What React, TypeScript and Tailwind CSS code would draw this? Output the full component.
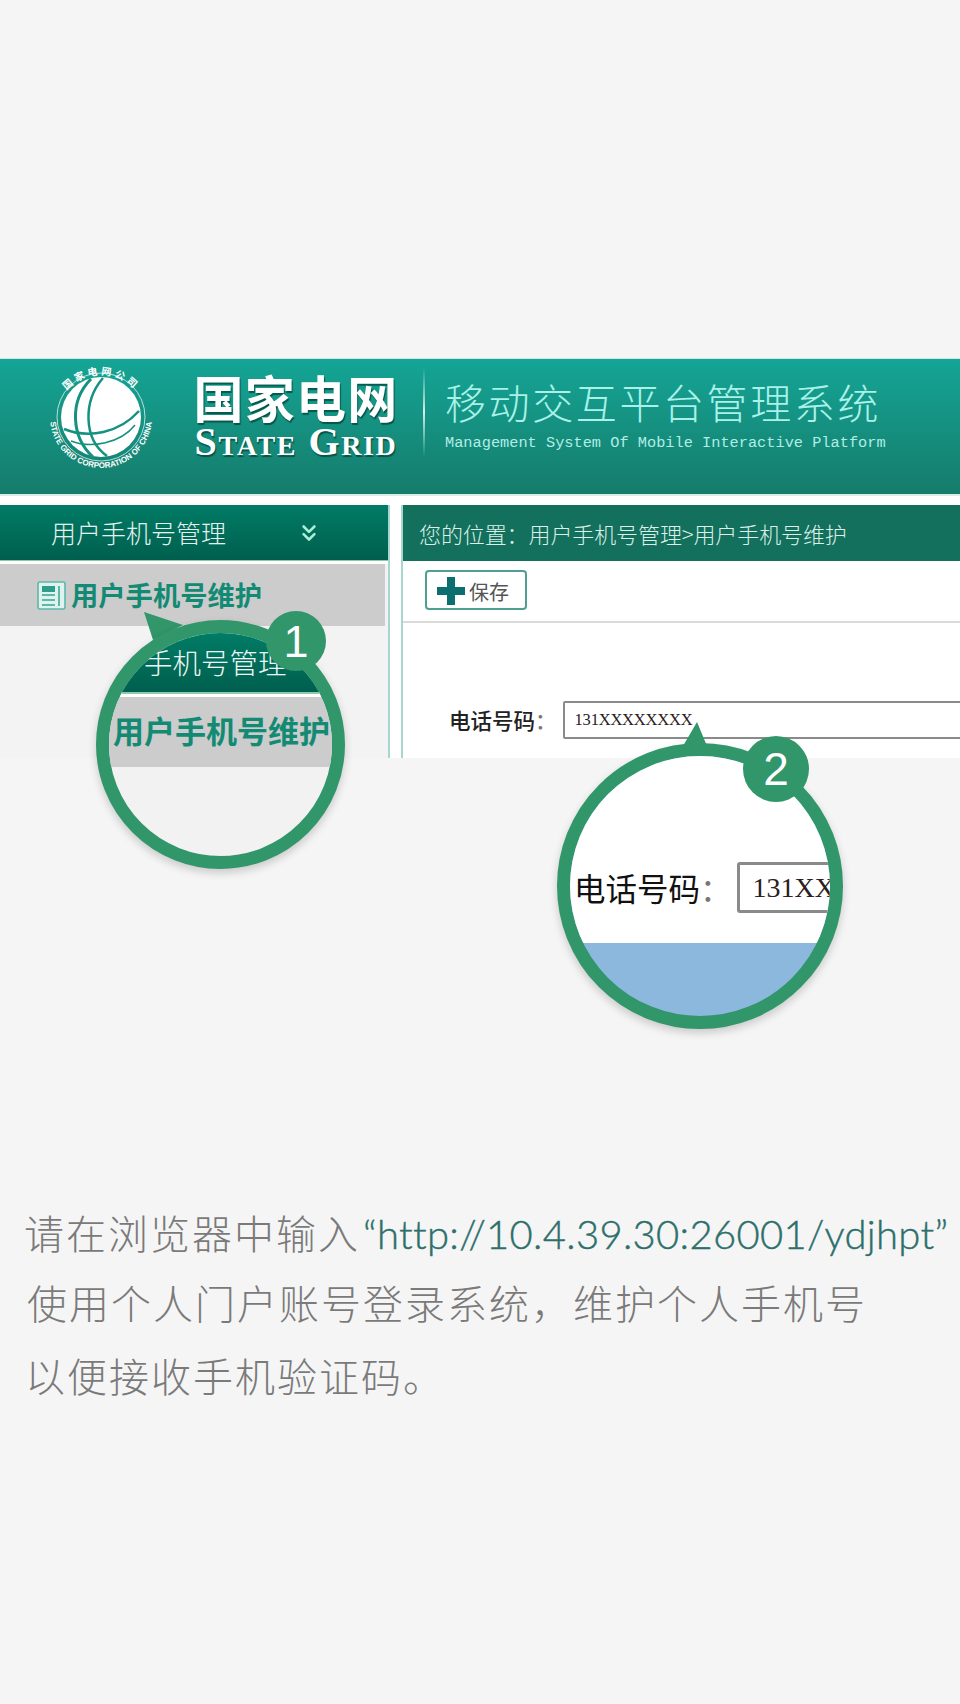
import { ChevronsDown } from "lucide-react";

const CJK = "font-['Noto_Sans_CJK_SC',sans-serif]";

function GlobeLogo() {
  return (
    <svg width="112" height="112" viewBox="0 0 112 112" className="shrink-0">
      <defs>
        <path id="ringTop" d="M 10 60 A 46 46 0 0 1 102 60" fill="none" />
        <path id="ringBottom" d="M 5 56 A 51 51 0 0 0 107 56" fill="none" />
      </defs>
      <circle cx="56" cy="56" r="44" fill="none" stroke="#ffffff" strokeWidth="1" opacity="0.7" />
      <circle cx="56" cy="56" r="40" fill="#ffffff" />
      <path d="M46 18 C 24 40 26 76 48 96" fill="none" stroke="#15917f" strokeWidth="3" />
      <path d="M58 17 C 38 40 38 78 62 95" fill="none" stroke="#15917f" strokeWidth="2.5" />
      <path d="M19 68 C 44 78 74 72 94 50" fill="none" stroke="#15917f" strokeWidth="2.5" />
      <path d="M26 80 C 46 88 76 82 90 64" fill="none" stroke="#15917f" strokeWidth="1.5" />
      <text fontSize="10" fontWeight="700" fill="#ffffff" fontFamily="'Noto Sans CJK SC',sans-serif" letterSpacing="3">
        <textPath href="#ringTop" startOffset="50%" textAnchor="middle">国家电网公司</textPath>
      </text>
      <text fontSize="8" fontWeight="700" fill="#ffffff" fontFamily="'Liberation Sans',sans-serif">
        <textPath href="#ringBottom" startOffset="50%" textAnchor="middle">STATE GRID CORPORATION OF CHINA</textPath>
      </text>
    </svg>
  );
}

function TopBanner() {
  return (
    <div className="flex h-[136px] items-start border-t border-[#cfe6e2] bg-gradient-to-b from-[#14a596] to-[#157c6b] pl-[45px]">
      <div className="mt-[2px]">
        <GlobeLogo />
      </div>
      <div className="ml-[36px] mt-[11px] flex w-[206px] flex-col items-center text-white">
        <div className={`${CJK} whitespace-nowrap text-[50px] font-bold leading-[52px] tracking-[1.2px] [text-shadow:1px_2px_1px_rgba(0,60,50,0.7)]`}>
          国家电网
        </div>
        <div className="mt-[3px] font-['Liberation_Serif',serif] text-[40px] font-bold leading-[34px] tracking-[1.6px] whitespace-nowrap [font-variant:small-caps] [text-shadow:1px_2px_1px_rgba(0,60,50,0.7)]">
          State Grid
        </div>
      </div>
      <div className="ml-[24px] mt-[8px] h-[90px] w-[2px] bg-gradient-to-b from-transparent via-[#d5efe9] to-transparent" />
      <div className="ml-[20px] text-[#a9f1e9]">
        <div className={`${CJK} mt-[17px] whitespace-nowrap text-[41px] font-light leading-[50px] tracking-[2.6px]`}>
          移动交互平台管理系统
        </div>
        <div className="mt-[8px] whitespace-nowrap font-['Liberation_Mono',monospace] text-[15.3px] leading-[18px] text-[#b0eee5]">
          Management System Of Mobile Interactive Platform
        </div>
      </div>
    </div>
  );
}

function Sidebar() {
  return (
    <div className="flex w-[390px] shrink-0 flex-col border-r-2 border-[#a9d5cf] bg-[#f3f3f3]">
      <div className="flex h-[56px] items-center border-b border-[#8fc9a8] bg-gradient-to-b from-[#007c66] to-[#005f4e] pl-[51px] text-white">
        <span className={`${CJK} text-[25px] font-light leading-none text-[#e6f2ee]`}>用户手机号管理</span>
        <ChevronsDown size={26} strokeWidth={2.4} className="ml-[70px] text-[#a8eed8]" />
      </div>
      <div className="h-[3px] bg-white" />
      <div className="mr-[3px] flex h-[62px] items-center bg-[#cccccc] pl-[37px]">
        <svg width="29" height="29" viewBox="0 0 29 29" className="shrink-0">
          <rect x="1" y="1" width="27" height="27" rx="2" fill="#dff2ee" stroke="#5cb8aa" strokeWidth="1.6" />
          <rect x="5" y="5" width="13" height="6" fill="#2f9d8b" />
          <rect x="5" y="13" width="13" height="2" fill="#5cb8aa" />
          <rect x="5" y="18" width="13" height="2" fill="#5cb8aa" />
          <rect x="5" y="23" width="13" height="2" fill="#5cb8aa" />
          <rect x="21" y="5" width="2" height="20" fill="#5cb8aa" />
        </svg>
        <span className={`${CJK} ml-[5px] text-[27.3px] font-bold leading-none text-[#138a73]`}>用户手机号维护</span>
      </div>
    </div>
  );
}

function ContentPanel() {
  return (
    <div className="ml-[11px] flex min-w-0 flex-1 flex-col overflow-hidden border-l-2 border-[#a9d5cf]">
      <div className="-ml-[2px] flex h-[56px] items-center bg-[#12705c] pl-[18px]">
        <span className={`${CJK} whitespace-nowrap text-[22px] font-light leading-none tracking-[-0.1px] text-[#dcefe9]`}>
          您的位置：用户手机号管理&gt;用户手机号维护
        </span>
      </div>
      <div className="flex h-[62px] shrink-0 items-start border-b-2 border-[#dadada] bg-white pl-[22px] pt-[9px]">
        <div className="flex h-[40px] w-[102px] items-center rounded-[4px] border-2 border-[#4f9f93] pl-[10px]">
          <svg width="28" height="28" viewBox="0 0 28 28" className="mt-[2px] shrink-0">
            <path d="M10 0h8v10h10v8H18v10h-8V18H0v-8h10z" fill="#0b6f70" />
          </svg>
          <span className={`${CJK} ml-[4px] mt-[3px] text-[20px] leading-none text-[#555555]`}>保存</span>
        </div>
      </div>
      <div className="flex flex-1 items-start bg-white pl-[46px] pt-[78px]">
        <span className={`${CJK} whitespace-nowrap text-[21.5px] font-medium leading-[38px] text-[#222222]`}>
          电话号码<span className="text-[#777777]">：</span>
        </span>
        <div className="ml-[6px] flex h-[38px] w-[500px] shrink-0 items-center rounded-[2px] border-2 border-[#8a8a8a] pl-[10px] font-['Liberation_Serif',serif] text-[16.5px] tracking-[-0.2px] text-[#2b2020]">
          131XXXXXXXX
        </div>
      </div>
    </div>
  );
}

function CalloutOne() {
  return (
    <div className="absolute left-[96px] top-[620px] h-[249px] w-[249px]">
      <svg width="90" height="30" viewBox="0 0 90 30" className="absolute left-0 -top-[8px]">
        <path d="M48 0 L87 13 L57 28 Z" fill="#31966a" />
      </svg>
      <div className="relative flex h-full w-full flex-col overflow-hidden rounded-full border-[13px] border-[#31966a] bg-[#f2f2f2] shadow-[0_4px_8px_rgba(0,0,0,0.18)]">
        <div className="flex h-[59px] shrink-0 items-center bg-gradient-to-b from-[#007c66] to-[#005f4e]">
          <span className={`${CJK} -ml-[22px] -mt-[1px] whitespace-nowrap text-[28.5px] font-light leading-none text-[#eef6f3]`}>用户手机号管理</span>
        </div>
        <div className="h-[5px] shrink-0 border-t-2 border-[#8fc9a8] bg-white" />
        <div className="flex h-[70px] shrink-0 items-center bg-[#cccccc] pl-[4px]">
          <span className={`${CJK} -mt-[5px] whitespace-nowrap text-[31px] font-bold leading-none text-[#138a73]`}>用户手机号维护</span>
        </div>
      </div>
      <div className="absolute left-[170px] -top-[9px] flex h-[60px] w-[60px] items-center justify-center rounded-full bg-[#31966a] font-['Liberation_Sans',sans-serif] text-[45px] leading-none text-white">
        1
      </div>
    </div>
  );
}

function CalloutTwo() {
  return (
    <div className="absolute left-[557px] top-[743px] h-[286px] w-[286px]">
      <svg width="24" height="24" viewBox="0 0 24 24" className="absolute left-[126px] -top-[21px]">
        <path d="M14 0 L24 24 L0 24 Z" fill="#31966a" />
      </svg>
      <div className="flex h-full w-full flex-col overflow-hidden rounded-full border-[13px] border-[#31966a] bg-[#8db8de] shadow-[0_4px_8px_rgba(0,0,0,0.18)]">
        <div className="flex h-[187px] shrink-0 items-start bg-white pl-[4px] pt-[106px]">
          <span className={`${CJK} whitespace-nowrap text-[31.5px] leading-[51px] text-[#111111]`}>
            电话号码<span className="text-[#777777]">：</span>
          </span>
          <div className="ml-[5px] flex h-[51px] w-[200px] shrink-0 items-center rounded-[3px] border-[3px] border-[#8a8a8a] pl-[13px] font-['Liberation_Serif',serif] text-[28px] text-[#2b2020]">
            131XXXXX
          </div>
        </div>
      </div>
      <div className="absolute left-[186px] -top-[7px] flex h-[66px] w-[66px] items-center justify-center rounded-full bg-[#31966a] font-['Liberation_Sans',sans-serif] text-[46px] leading-none text-white">
        2
      </div>
    </div>
  );
}

export default function App() {
  return (
    <div className="relative min-h-[1704px] overflow-hidden bg-[#f5f5f5] pt-[358px]">
      <div className="flex h-[400px] flex-col bg-white">
        <TopBanner />
        <div className="h-[2px] bg-[#d8ece8]" />
        <div className="mt-[9px] flex min-h-0 flex-1">
          <Sidebar />
          <ContentPanel />
        </div>
      </div>

      <CalloutOne />
      <CalloutTwo />

      <div className={`${CJK} mt-[439px] text-[40px] font-light text-[#7a7a7a] tracking-[2px]`}>
        <p className="h-[70px] whitespace-nowrap pl-[24px] leading-[71px]">
          请在浏览器中输入
          <span className="ml-[3px] font-['Lato',sans-serif] font-light text-[#2d6f6b] tracking-[0.3px] [-webkit-text-stroke:0.4px_#2d6f6b]">“http://10.4.39.30:26001/ydjhpt”</span>
        </p>
        <p className="h-[73px] whitespace-nowrap pl-[27px] leading-[71px]">使用个人门户账号登录系统，维护个人手机号</p>
        <p className="whitespace-nowrap pl-[25px] leading-[71px]">以便接收手机验证码。</p>
      </div>
    </div>
  );
}
